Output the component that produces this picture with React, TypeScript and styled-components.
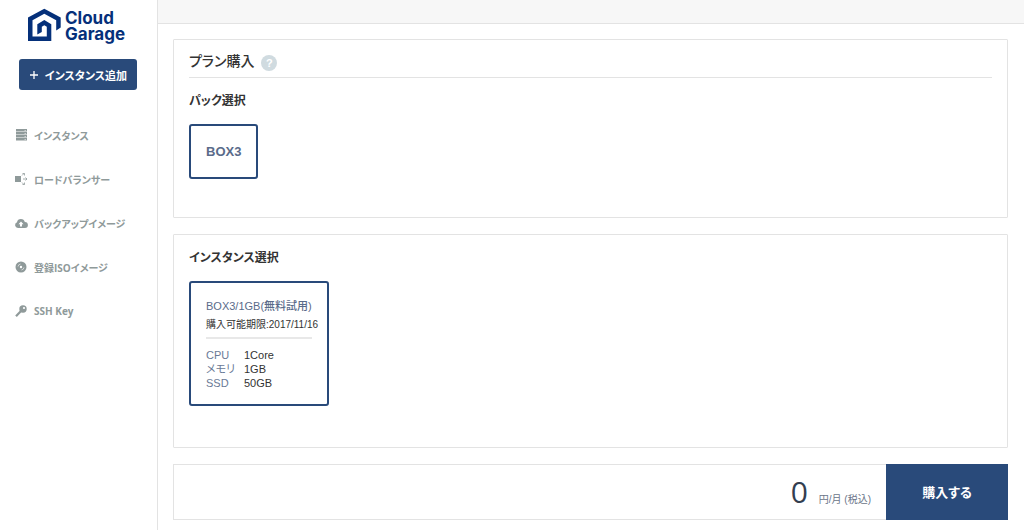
import React, { useState } from 'react';
import styled, { createGlobalStyle } from 'styled-components';

const navy = '#294a7a';
const line = '#e3e3e3';

const GlobalStyle = createGlobalStyle`
  *, *::before, *::after { box-sizing: border-box; }
  body {
    margin: 0;
    background: #fff;
    color: #333;
    font-family: "Liberation Sans", "Noto Sans CJK JP", sans-serif;
    font-size: 12px;
    font-feature-settings: "palt";
  }
  button { font: inherit; font-feature-settings: inherit; cursor: pointer; }
  h1, h2, p, ul { margin: 0; padding: 0; }
`;

const Page = styled.div`
  display: flex;
  min-height: 100vh;
`;

const Sidebar = styled.aside`
  flex: 0 0 158px;
  border-right: 1px solid ${line};
`;

const Logo = styled.a`
  display: flex;
  align-items: center;
  gap: 4px;
  padding: 8px 0 0 27px;
  height: 44px;
  color: #05307a;
  text-decoration: none;
  font: 700 17px/16px Inter, sans-serif;
`;

const AddButton = styled.button`
  display: flex;
  align-items: center;
  justify-content: center;
  gap: 6px;
  height: 31px;
  width: 118px;
  margin: 15px 0 23px 19px;
  padding: 0;
  border: 0;
  border-radius: 3px;
  background: ${navy};
  color: #fff;
  font-size: 11px;
  font-weight: 700;
`;

const NavList = styled.ul`
  list-style: none;
`;

const NavLink = styled.a`
  display: flex;
  align-items: center;
  gap: 6px;
  height: 44px;
  padding-left: 14px;
  color: #8f9a9a;
  font-family: "Open Sans", "Noto Sans CJK JP", sans-serif;
  font-size: 10px;
  font-weight: 700;
  text-decoration: none;
  white-space: nowrap;
`;

const Content = styled.div`
  flex: 1;
  min-width: 0;
`;

const TopBar = styled.header`
  height: 24px;
  background: #f7f7f7;
  border-bottom: 1px solid ${line};
`;

const Main = styled.main`
  display: grid;
  gap: 16px;
  padding: 15px 16px 10px 15px;
`;

const Panel = styled.section`
  padding: 0 15px 38px;
  border: 1px solid ${line};
  border-radius: 1px;
`;

const InstancePanel = styled(Panel)`
  padding-bottom: 41px;
`;

const TitleRow = styled.div`
  display: flex;
  align-items: center;
  gap: 7px;
  height: 38px;
  border-bottom: 1px solid ${line};
`;

const Title = styled.h1`
  padding-top: 4px;
  font-size: 14px;
  font-weight: 500;
  line-height: 24px;
`;

const HelpButton = styled.button`
  width: 16px;
  height: 16px;
  padding: 0;
  margin-top: 8px;
  border: 0;
  border-radius: 50%;
  background: #d0dbe0;
  color: #fff;
  font-size: 11px;
  font-weight: 700;
  line-height: 16px;
`;

const Heading = styled.h2`
  font-size: 12px;
  font-weight: 700;
  line-height: 46px;
`;

const Choice = styled.button<{ $selected: boolean }>`
  display: block;
  border: 2px solid ${p => (p.$selected ? navy : line)};
  border-radius: 3px;
  background: #fff;
  color: #333;
  text-align: left;
  white-space: nowrap;
`;

const PackChoice = styled(Choice)`
  height: 55px;
  padding: 0 15px;
  color: #5a6b8a;
  font-size: 13px;
  font-weight: 700;
`;

const InstanceChoice = styled(Choice)`
  width: 140px;
  padding: 14px 15px;
  font-size: 11px;
`;

const InstanceName = styled.span`
  display: block;
  color: #5a6b8a;
  font-weight: 500;
  line-height: 18px;
`;

const Deadline = styled.span`
  display: block;
  height: 24px;
  margin-bottom: 9px;
  border-bottom: 2px solid #e8e8e8;
  font-size: 10px;
  line-height: 20px;
`;

const Specs = styled.span`
  display: grid;
  grid-template-columns: 38px 1fr;
  line-height: 14px;
`;

const SpecLabel = styled.span`
  color: #6a7a96;
`;

const Checkout = styled.section`
  display: flex;
  justify-content: flex-end;
  height: 56px;
  border: 1px solid ${line};
`;

const Price = styled.p`
  display: flex;
  align-items: baseline;
  gap: 11px;
  padding-right: 16px;
  color: #6a7588;
  font-size: 10px;
  line-height: 54px;
`;

const Amount = styled.strong`
  color: #333e50;
  font-family: "Open Sans", sans-serif;
  font-size: 30px;
  font-weight: 400;
`;

const BuyButton = styled.button`
  width: 122px;
  margin: -1px;
  padding: 0 0 2px;
  border: 0;
  background: ${navy};
  color: #fff;
  font-size: 13px;
  font-weight: 700;
`;

const LogoMark = () => (
  <svg width="34" height="36" viewBox="0 0 34 36" aria-hidden="true">
    <path
      d="M1 9.500L17.300 .8L33.700 9.500V19.500L29.200 22.500V12.200L17.300 5.800L5.500 12.200V28.500H19.800V18.800L17.300 17.300L14.800 18.800V24L10.300 26.500V16.200L17.300 12L24.300 16.200V33H1z"
      fill="currentColor"
    />
  </svg>
);

const ServerIcon = () => (
  <svg width="14" height="14" viewBox="0 0 14 14" fill="currentColor" aria-hidden="true">
    <path d="M2 1h11v2.500H2zM2 4h11v2.500H2zM2 7h11v2.500H2zM2 10h11v2.500H2z" />
    <path d="M10.500 2h1.500v.8h-1.500zM10.500 5h1.500v.8h-1.500zM10.500 8h1.500v.8h-1.500zM10.500 11h1.500v.8h-1.500z" fill="#fff" opacity=".7" />
  </svg>
);

const BalancerIcon = () => (
  <svg width="14" height="14" viewBox="0 0 14 14" fill="currentColor" aria-hidden="true">
    <path d="M1 4h6v6H1z" />
    <path d="M8 3.500L10 1.500M9 7h4M8 10.500l2 2M8.500 1.500h2v2M11.500 5.500L13 7l-1.500 1.500M8.500 12.500h2v-2" fill="none" stroke="currentColor" strokeWidth=".8" />
  </svg>
);

const CloudIcon = () => (
  <svg width="14" height="14" viewBox="0 0 14 14" aria-hidden="true">
    <path d="M4 12a3 3 0 0 1-1-5.800A4 4 0 0 1 10.800 6 3 3 0 0 1 11 12z" fill="currentColor" />
    <path d="M7 5.500L9.500 8.200H8V10.500H6V8.200H4.500z" fill="#fff" />
  </svg>
);

const DiscIcon = () => (
  <svg width="14" height="14" viewBox="0 0 14 14" aria-hidden="true">
    <circle cx="7" cy="7" r="5.500" fill="currentColor" />
    <circle cx="7" cy="7" r="1.200" fill="#fff" />
    <path d="M4 6.500A3 3 0 0 1 6.500 4M10 7.500A3 3 0 0 1 7.500 10" fill="none" stroke="#fff" strokeWidth=".6" />
  </svg>
);

const KeyIcon = () => (
  <svg width="14" height="14" viewBox="0 0 14 14" aria-hidden="true">
    <path d="M2 12.200L7 7" stroke="currentColor" strokeWidth="2.200" />
    <circle cx="9" cy="5" r="3.700" fill="currentColor" />
    <circle cx="10" cy="4" r="1.100" fill="#fff" />
  </svg>
);

const PlusIcon = () => (
  <svg width="10" height="10" viewBox="0 0 10 10" stroke="currentColor" strokeWidth="1.300" aria-hidden="true">
    <path d="M5 1v8M1 5h8" />
  </svg>
);

const navItems = [
  { label: 'インスタンス', Icon: ServerIcon },
  { label: 'ロードバランサー', Icon: BalancerIcon },
  { label: 'バックアップイメージ', Icon: CloudIcon },
  { label: '登録ISOイメージ', Icon: DiscIcon },
  { label: 'SSH Key', Icon: KeyIcon },
];

const specs = [
  ['CPU', '1Core'],
  ['メモリ', '1GB'],
  ['SSD', '50GB'],
];

export default function App() {
  const [pack, setPack] = useState(true);
  const [instance, setInstance] = useState(true);

  return (
    <Page lang="ja">
      <GlobalStyle />
      <Sidebar>
        <Logo href="#">
          <LogoMark />
          <span>
            Cloud
            <br />
            Garage
          </span>
        </Logo>
        <AddButton type="button">
          <PlusIcon />
          インスタンス追加
        </AddButton>
        <nav>
          <NavList>
            {navItems.map(({ label, Icon }) => (
              <li key={label}>
                <NavLink href="#">
                  <Icon />
                  {label}
                </NavLink>
              </li>
            ))}
          </NavList>
        </nav>
      </Sidebar>
      <Content>
        <TopBar />
        <Main>
          <Panel>
            <TitleRow>
              <Title>プラン購入</Title>
              <HelpButton type="button">?</HelpButton>
            </TitleRow>
            <Heading>パック選択</Heading>
            <PackChoice type="button" $selected={pack} aria-pressed={pack} onClick={() => setPack(!pack)}>
              BOX3
            </PackChoice>
          </Panel>
          <InstancePanel>
            <Heading>インスタンス選択</Heading>
            <InstanceChoice
              type="button"
              $selected={instance}
              aria-pressed={instance}
              onClick={() => setInstance(!instance)}
            >
              <InstanceName>BOX3/1GB(無料試用)</InstanceName>
              <Deadline>購入可能期限:2017/11/16</Deadline>
              <Specs>
                {specs.map(([name, value]) => (
                  <React.Fragment key={name}>
                    <SpecLabel>{name}</SpecLabel>
                    <span>{value}</span>
                  </React.Fragment>
                ))}
              </Specs>
            </InstanceChoice>
          </InstancePanel>
          <Checkout>
            <Price>
              <Amount>0</Amount>
              円/月 (税込)
            </Price>
            <BuyButton type="button">購入する</BuyButton>
          </Checkout>
        </Main>
      </Content>
    </Page>
  );
}
